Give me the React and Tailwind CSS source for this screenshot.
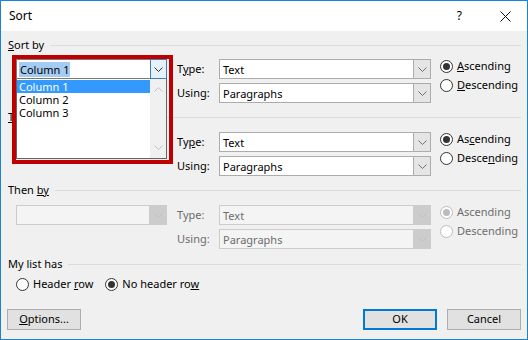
import React from "react";

function Chevron({ color = "#606060", up = false }) {
  return (
    <svg width="9" height="5" viewBox="0 0 9 5" className={up ? "rotate-180" : ""}>
      <polyline points="0.5,0.5 4.5,4.5 8.5,0.5" fill="none" stroke={color} strokeWidth="1" />
    </svg>
  );
}

function Combo({ value, width = "w-[212px]", disabled = false }) {
  return (
    <div
      className={`flex h-[20px] ${width} border ${
        disabled ? "border-[#cccccc] bg-[#f4f4f4] text-[#6d6d6d]" : "border-[#acacac] bg-white"
      }`}
    >
      <div className="flex flex-1 items-center pl-[3px] leading-none">{value}</div>
      <div
        className={`flex w-[17px] items-center justify-center border-l ${
          disabled ? "border-[#cccccc] bg-[#cccccc]" : "border-[#acacac] bg-[#e5e5e5]"
        }`}
      >
        <Chevron color={disabled ? "#bfbfbf" : "#707070"} />
      </div>
    </div>
  );
}

function Radio({ checked, disabled, children }) {
  const ring = disabled ? "border-[#bcbcbc]" : "border-[#333333]";
  const dot = disabled ? "bg-[#bcbcbc]" : "bg-[#333333]";
  return (
    <div className={`flex h-[16px] items-center gap-[4px] ${disabled ? "text-[#6d6d6d]" : ""}`}>
      <div className={`flex h-[13px] w-[13px] items-center justify-center rounded-full border bg-white ${ring}`}>
        {checked && <div className={`h-[7px] w-[7px] rounded-full ${dot}`} />}
      </div>
      <span className="whitespace-nowrap">{children}</span>
    </div>
  );
}

function Header({ children }) {
  return (
    <div className="flex h-[16px] items-center pl-[7px] pr-[6px]">
      <span className="whitespace-nowrap">{children}</span>
      <div className="ml-[6px] h-px flex-1 bg-[#dcdcdc]" />
    </div>
  );
}

function SortRow({ left, typeLabel, usingLabel, asc, desc, disabled }) {
  const lab = disabled ? "text-[#6d6d6d]" : "";
  return (
    <div className="flex pl-[15px]">
      <div className="relative w-[151px]">{left}</div>
      <div className={`ml-[10px] flex w-[42px] flex-col gap-[4px] ${lab}`}>
        <div className="flex h-[20px] items-center">{typeLabel}</div>
        <div className="flex h-[20px] items-center">{usingLabel}</div>
      </div>
      <div className="flex flex-col gap-[4px]">
        <Combo value="Text" disabled={disabled} />
        <Combo value="Paragraphs" disabled={disabled} />
      </div>
      <div className="ml-[9px] -mt-px flex flex-col gap-[3px]">
        <Radio checked disabled={disabled}>{asc}</Radio>
        <Radio disabled={disabled}>{desc}</Radio>
      </div>
    </div>
  );
}

// open list of the first combo, with the red highlight frame around it
function Dropdown() {
  return (
    <div className="absolute -left-[4px] -top-[4px] z-10 h-[109px] w-[161px] border-4 border-[#c00000]">
      <div className="w-[151px]">
        <div className="flex h-[20px] border border-[#7a7a7a] bg-white">
          <div className="flex flex-1 items-center pl-[2px] leading-none">
            <span className="bg-[#a4cbf2] px-px py-[2px]">Column 1</span>
          </div>
          <div className="-my-px -mr-px flex w-[17px] items-center justify-center border border-[#3c7fb1] bg-[#e5f1fb]">
            <Chevron color="#333333" />
          </div>
        </div>
        <div className="flex h-[80px] border border-t-0 border-[#646464] bg-white">
          <div className="flex flex-1 flex-col pt-px leading-[13px]">
            <div className="h-[13px] bg-[#3399ff] pl-[2px] text-white">Column 1</div>
            <div className="h-[13px] pl-[2px]">Column 2</div>
            <div className="h-[13px] pl-[2px]">Column 3</div>
          </div>
          <div className="flex w-[16px] flex-col items-center justify-between bg-[#f0f0f0] py-[8px]">
            <Chevron color="#c2c2c2" up />
            <Chevron color="#c2c2c2" />
          </div>
        </div>
      </div>
    </div>
  );
}

function Button({ children, primary }) {
  return (
    <div
      className={`flex h-[21px] w-[74px] items-center justify-center bg-[#e1e1e1] ${
        primary ? "border-2 border-[#0078d7]" : "border border-[#adadad]"
      }`}
    >
      {children}
    </div>
  );
}

export default function App() {
  return (
    <div className="flex h-[340px] w-[528px] flex-col border border-[#1883d7] bg-[#f0f0f0] font-['Segoe_UI','Noto_Sans',sans-serif] text-[11px] text-black">
      <div className="flex h-[30px] items-center bg-white pl-[8px] pr-[16px]">
        <span className="flex-1 text-[12px]">Sort</span>
        <span className="mr-[38px] text-[12px]">?</span>
        <svg width="11" height="11" viewBox="0 0 11 11">
          <path d="M0.5 0.5 L10.5 10.5 M10.5 0.5 L0.5 10.5" stroke="#111" strokeWidth="1" />
        </svg>
      </div>

      <div className="mt-[6px]">
        <Header>
          <u>S</u>ort by
        </Header>
      </div>
      <div className="relative z-10 mt-[6px]">
        <SortRow
          left={
            <>
              <Combo value="Column 1" width="w-[151px]" />
              <Dropdown />
            </>
          }
          typeLabel={<span>T<u>y</u>pe:</span>}
          usingLabel="Using:"
          asc={<><u>A</u>scending</>}
          desc={<><u>D</u>escending</>}
        />
      </div>

      <div className="mt-[6px]">
        <Header>
          <u>T</u>hen by
        </Header>
      </div>
      <div className="mt-[7px]">
        <SortRow
          left={<Combo value="" width="w-[151px]" />}
          typeLabel={<span>Ty<u>p</u>e:</span>}
          usingLabel="Using:"
          asc={<>As<u>c</u>ending</>}
          desc={<>Desce<u>n</u>ding</>}
        />
      </div>

      <div className="mt-[6px]">
        <Header>
          Then <u>by</u>
        </Header>
      </div>
      <div className="mt-[7px]">
        <SortRow
          left={<Combo value="" width="w-[151px]" disabled />}
          typeLabel="Type:"
          usingLabel="Using:"
          asc="Ascending"
          desc="Descending"
          disabled
        />
      </div>

      <div className="mt-[7px]">
        <Header>My list has</Header>
      </div>
      <div className="mt-[4px] flex items-center pl-[15px]">
        <Radio>
          Header <u>r</u>ow
        </Radio>
        <div className="ml-[12px]">
          <Radio checked>
            No header ro<u>w</u>
          </Radio>
        </div>
      </div>

      <div className="mt-[17px] flex pl-[6px] pr-[6px]">
        <Button>
          <span>
            <u>O</u>ptions...
          </span>
        </Button>
        <div className="flex-1" />
        <Button primary>OK</Button>
        <div className="w-[10px]" />
        <Button>Cancel</Button>
      </div>
    </div>
  );
}
